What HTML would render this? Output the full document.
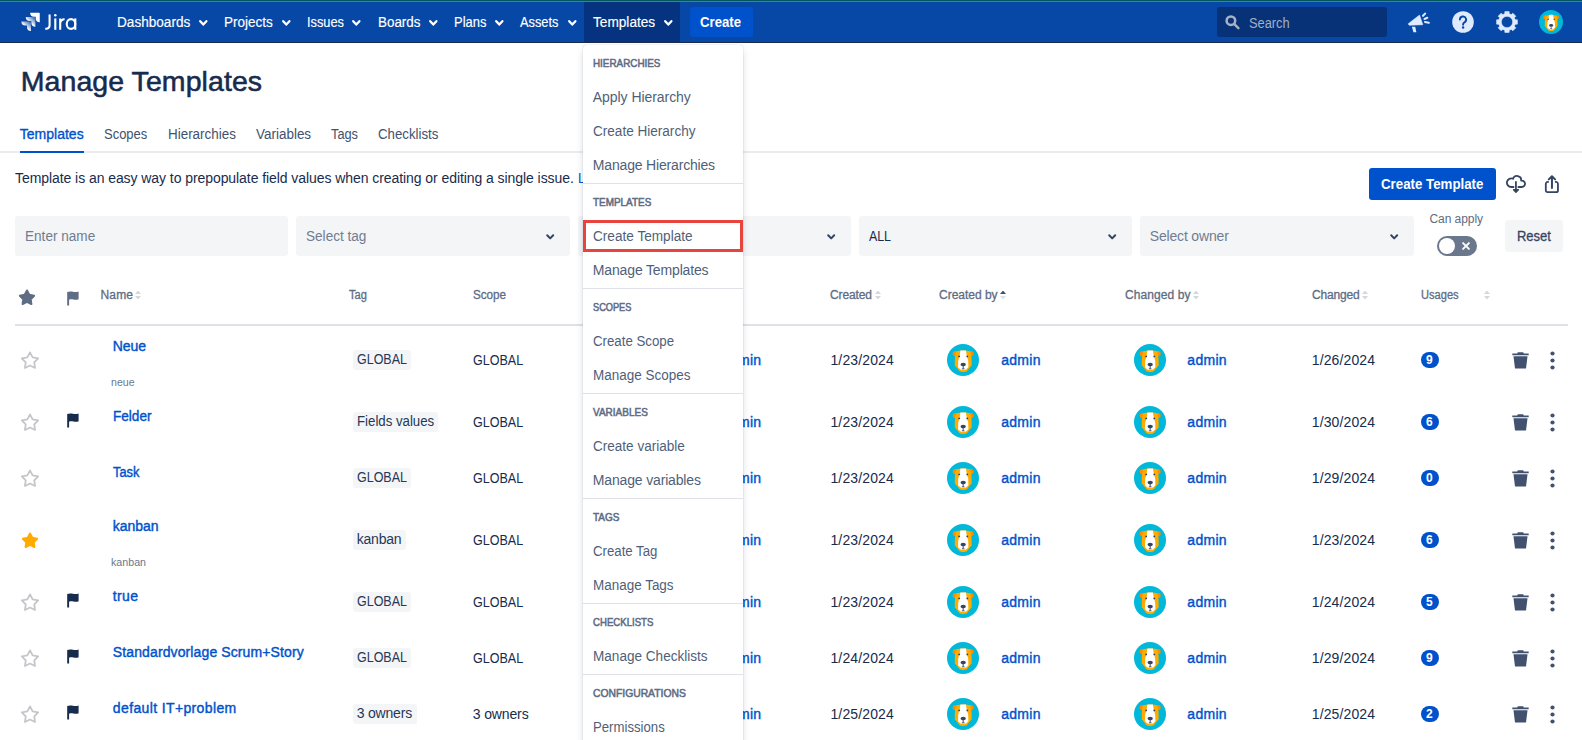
<!DOCTYPE html>
<html lang="en"><head><meta charset="utf-8"><title>Manage Templates - Jira</title>
<style>
*{box-sizing:border-box;margin:0;padding:0}
html,body{width:1582px;height:740px;overflow:hidden;background:#fff}
body{font-family:"Liberation Sans",sans-serif;font-size:14px;color:#172B4D;position:relative}
.t{position:absolute;white-space:nowrap;display:block;transform-origin:0 50%}
.a{position:absolute;display:block}
svg{position:absolute;display:block;overflow:visible}
.fld{position:absolute;top:216px;height:40px;background:#F4F5F7;border-radius:3px}
.loz{position:absolute;height:20px;background:#F4F5F7;border-radius:3px}
.badge{position:absolute;width:18px;height:16px;border-radius:8px;background:#0052CC}
.div{position:absolute;left:583px;width:160px;height:1px;background:#DFE1E6}
</style></head>
<body>
<div class="a" style="left:0;top:0;width:1582px;height:1px;background:#00585C"></div><div class="a" style="left:0;top:1px;width:1582px;height:1px;background:#3D8587"></div>
<header class="a" style="left:0;top:2px;width:1582px;height:41px;background:#0747A6;border-bottom:1px solid #1B2B4B"></header>
<div class="a" style="left:584px;top:2px;width:96px;height:40px;background:#05337F"></div>
<svg style="left:19.6px;top:12.4px" width="20" height="20" viewBox="0 0 32 32">
<defs>
<linearGradient id="jg1" x1="0.95" y1="0.05" x2="0.45" y2="0.6"><stop offset="0.1" stop-color="#fff" stop-opacity="0.25"/><stop offset="1" stop-color="#fff"/></linearGradient>
</defs>
<path fill="#fff" d="M30.4 1H16.2a6.4 6.4 0 0 0 6.4 6.4h2.6v2.5a6.4 6.4 0 0 0 6.4 6.4V2.2A1.2 1.2 0 0 0 30.4 1z"/>
<path fill="url(#jg1)" d="M23.4 8.1H9.2a6.4 6.4 0 0 0 6.4 6.4h2.6V17a6.4 6.4 0 0 0 6.4 6.4V9.3a1.2 1.2 0 0 0-1.2-1.2z"/>
<path fill="url(#jg1)" d="M16.4 15.2H2.2a6.4 6.4 0 0 0 6.4 6.4h2.6v2.5a6.4 6.4 0 0 0 6.4 6.4V16.4a1.2 1.2 0 0 0-1.2-1.2z"/>
</svg>
<svg style="left:44px;top:13px" width="34" height="19" viewBox="0 0 34 19" fill="none" stroke="#fff" stroke-width="2.1">
<path d="M5.6 1.5V12.6a3.2 3.2 0 0 1-3.2 3.2H1.2"/>
<path d="M11.3 5.4V16.8"/>
<path d="M16.2 5.4V16.8M16.2 10.6a4.2 4.2 0 0 1 4.4-4.3"/>
<ellipse cx="27" cy="11" rx="4.25" ry="4.9"/>
<path d="M31.3 5.4V16.8"/>
<circle cx="11.3" cy="2.3" r="1.3" fill="#fff" stroke="none"/>
</svg>
<span class="t" style="left:116.64px;top:12.15px;font-size:14px;line-height:20px;color:#fff;transform:scaleX(0.9709);-webkit-text-stroke:0.15px #fff;">Dashboards</span>
<svg style="left:199.0px;top:19.6px" width="8.6" height="5.6" viewBox="0 0 8.6 5.6" fill="none" stroke="#fff" stroke-width="2.3" stroke-linecap="round" stroke-linejoin="round"><path d="M1.2 1.2L4.30 4.60L7.40 1.2"/></svg>
<span class="t" style="left:224.14px;top:12.15px;font-size:14px;line-height:20px;color:#fff;transform:scaleX(0.9629);-webkit-text-stroke:0.15px #fff;">Projects</span>
<svg style="left:281.9px;top:19.6px" width="8.6" height="5.6" viewBox="0 0 8.6 5.6" fill="none" stroke="#fff" stroke-width="2.3" stroke-linecap="round" stroke-linejoin="round"><path d="M1.2 1.2L4.30 4.60L7.40 1.2"/></svg>
<span class="t" style="left:306.74px;top:12.15px;font-size:14px;line-height:20px;color:#fff;transform:scaleX(0.9118);-webkit-text-stroke:0.15px #fff;">Issues</span>
<svg style="left:351.9px;top:19.6px" width="8.6" height="5.6" viewBox="0 0 8.6 5.6" fill="none" stroke="#fff" stroke-width="2.3" stroke-linecap="round" stroke-linejoin="round"><path d="M1.2 1.2L4.30 4.60L7.40 1.2"/></svg>
<span class="t" style="left:377.54px;top:12.15px;font-size:14px;line-height:20px;color:#fff;transform:scaleX(0.9581);-webkit-text-stroke:0.15px #fff;">Boards</span>
<svg style="left:428.8px;top:19.6px" width="8.6" height="5.6" viewBox="0 0 8.6 5.6" fill="none" stroke="#fff" stroke-width="2.3" stroke-linecap="round" stroke-linejoin="round"><path d="M1.2 1.2L4.30 4.60L7.40 1.2"/></svg>
<span class="t" style="left:454.14px;top:12.15px;font-size:14px;line-height:20px;color:#fff;transform:scaleX(0.9249);-webkit-text-stroke:0.15px #fff;">Plans</span>
<svg style="left:495.1px;top:19.6px" width="8.6" height="5.6" viewBox="0 0 8.6 5.6" fill="none" stroke="#fff" stroke-width="2.3" stroke-linecap="round" stroke-linejoin="round"><path d="M1.2 1.2L4.30 4.60L7.40 1.2"/></svg>
<span class="t" style="left:520.34px;top:12.15px;font-size:14px;line-height:20px;color:#fff;transform:scaleX(0.9139);-webkit-text-stroke:0.15px #fff;">Assets</span>
<svg style="left:567.8px;top:19.6px" width="8.6" height="5.6" viewBox="0 0 8.6 5.6" fill="none" stroke="#fff" stroke-width="2.3" stroke-linecap="round" stroke-linejoin="round"><path d="M1.2 1.2L4.30 4.60L7.40 1.2"/></svg>
<span class="t" style="left:593.14px;top:12.15px;font-size:14px;line-height:20px;color:#fff;transform:scaleX(0.9747);-webkit-text-stroke:0.15px #fff;">Templates</span>
<svg style="left:663.9px;top:19.6px" width="8.6" height="5.6" viewBox="0 0 8.6 5.6" fill="none" stroke="#fff" stroke-width="2.3" stroke-linecap="round" stroke-linejoin="round"><path d="M1.2 1.2L4.30 4.60L7.40 1.2"/></svg>
<div class="a" style="left:690px;top:7px;width:63px;height:30px;background:#0052CC;border-radius:3px"></div>
<span class="t" style="left:700.34px;top:12.15px;font-size:14px;line-height:20px;color:#fff;font-weight:700;transform:scaleX(0.9405);">Create</span>
<div class="a" style="left:1217px;top:7px;width:170px;height:30px;background:#083277;border-radius:3px"></div>
<svg style="left:1224.5px;top:15px" width="15" height="15" viewBox="0 0 15 15" fill="none" stroke="#A9B2C4" stroke-width="2.5" stroke-linecap="round"><circle cx="5.9" cy="5.7" r="4.3"/><path d="M9.3 9.2L13.4 13.2"/></svg>
<span class="t" style="left:1249.04px;top:12.75px;font-size:14px;line-height:20px;color:#A3AFC6;transform:scaleX(0.9153);">Search</span>
<svg style="left:1408px;top:11.5px" width="23" height="21" viewBox="0 0 23 21" fill="#DEEBFF">
<path d="M0.3 11.7L11.5 3.1L14.8 12.7L1.1 13.2Z" stroke="#DEEBFF" stroke-width="0.6" stroke-linejoin="round"/>
<path d="M3.9 14.7H7.2L8.4 20.3H5.4Z"/>
<g stroke="#DEEBFF" stroke-width="2.1" stroke-linecap="round" fill="none"><path d="M15 3.8L17.1 1.6"/><path d="M16.5 6.9L19.3 5.8"/><path d="M17 10L20.8 10.7"/></g>
</svg>
<svg style="left:1452px;top:11px" width="22" height="22" viewBox="0 0 22 22"><circle cx="11" cy="11" r="10.8" fill="#DEEBFF"/>
<path d="M7.9 8.6a3.1 3.1 0 1 1 4.6 2.7c-.9.6-1.4 1-1.4 2.1v.4" fill="none" stroke="#0747A6" stroke-width="1.9" stroke-linecap="round"/><circle cx="11.1" cy="16.5" r="1.2" fill="#0747A6"/></svg>
<svg style="left:1496px;top:11px" width="22" height="22" viewBox="0 0 22 22"><path fill="#DEEBFF" fill-rule="evenodd" stroke="#DEEBFF" stroke-width="0.6" stroke-linejoin="round" d="M8.85 0.62L13.15 0.62L13.24 2.80L15.22 3.62L16.82 2.14L19.86 5.18L18.38 6.78L19.20 8.76L21.38 8.85L21.38 13.15L19.20 13.24L18.38 15.22L19.86 16.82L16.82 19.86L15.22 18.38L13.24 19.20L13.15 21.38L8.85 21.38L8.76 19.20L6.78 18.38L5.18 19.86L2.14 16.82L3.62 15.22L2.80 13.24L0.62 13.15L0.62 8.85L2.80 8.76L3.62 6.78L2.14 5.18L5.18 2.14L6.78 3.62L8.76 2.80Z M11 5.3a5.7 5.7 0 1 0 0 11.4a5.7 5.7 0 1 0 0-11.4Z"/></svg>
<svg style="left:1539.0px;top:10.0px" width="24" height="24" viewBox="0 0 32 32"><circle cx="16" cy="16" r="16" fill="#00B8D9"/>
<circle cx="8.4" cy="9.6" r="2.7" fill="#FF8B00"/><circle cx="24" cy="9.6" r="2.7" fill="#FF8B00"/>
<path fill="#FFAB00" d="M9.2 7.4C11.5 6.2 20.9 6.2 23.2 7.4C24.6 10.5 24.8 17.5 24.6 21.2L19.8 27.2C18.3 28.1 14.1 28.1 12.6 27.2L7.8 21.2C7.6 17.5 7.8 10.5 9.2 7.4Z"/>
<path fill="#fff" d="M13.4 6.6C15 6.3 17.4 6.3 19 6.6C19.2 10 20.2 13.5 21.2 16.5L21.4 23.2L19 25.6C17.5 26.2 14.9 26.2 13.4 25.6L11 23.2L11.2 16.5C12.2 13.5 13.2 10 13.4 6.6Z"/>
<ellipse cx="16.2" cy="20.6" rx="2.7" ry="1.8" fill="#344563"/>
<path d="M16.2 22.2V24.6M14.9 24.8H17.5" stroke="#344563" stroke-width="0.9" fill="none"/>
<circle cx="12.2" cy="12.4" r="0.95" fill="#344563"/><circle cx="20.3" cy="12.4" r="0.95" fill="#344563"/></svg>
<span class="t" style="left:20.76px;top:63.52px;font-size:28.5px;line-height:34px;color:#172B4D;letter-spacing:0.067px;-webkit-text-stroke:0.55px #172B4D;">Manage Templates</span>
<div class="a" style="left:0;top:151px;width:1582px;height:2px;background:#EBECF0"></div>
<div class="a" style="left:20px;top:151px;width:64px;height:2px;background:#0052CC"></div>
<span class="t" style="left:19.74px;top:123.85px;font-size:14px;line-height:20px;color:#0052CC;letter-spacing:0.011px;-webkit-text-stroke:0.35px #0052CC;">Templates</span>
<span class="t" style="left:103.74px;top:123.85px;font-size:14px;line-height:20px;color:#42526E;transform:scaleX(0.9271);">Scopes</span>
<span class="t" style="left:167.84px;top:123.85px;font-size:14px;line-height:20px;color:#42526E;transform:scaleX(0.9589);">Hierarchies</span>
<span class="t" style="left:255.84px;top:123.85px;font-size:14px;line-height:20px;color:#42526E;transform:scaleX(0.9611);">Variables</span>
<span class="t" style="left:330.94px;top:123.85px;font-size:14px;line-height:20px;color:#42526E;transform:scaleX(0.9128);">Tags</span>
<span class="t" style="left:378.24px;top:123.85px;font-size:14px;line-height:20px;color:#42526E;transform:scaleX(0.9452);">Checklists</span>
<span class="t" style="left:15.04px;top:167.95px;font-size:14px;line-height:20px;color:#172B4D;letter-spacing:-0.068px;">Template is an easy way to prepopulate field values when creating or editing a single issue.</span>
<span class="t" style="left:578.04px;top:167.95px;font-size:14px;line-height:20px;color:#0052CC;transform:scaleX(0.9442);">Learn more</span>
<div class="a" style="left:1369px;top:168px;width:127px;height:32px;background:#0052CC;border-radius:3px"></div>
<span class="t" style="left:1381.04px;top:174.05px;font-size:14px;line-height:20px;color:#fff;font-weight:700;transform:scaleX(0.9490);">Create Template</span>
<svg style="left:1506px;top:174px" width="21" height="20" viewBox="0 0 21 20" fill="none" stroke="#344563" stroke-width="1.8" stroke-linecap="round" stroke-linejoin="round">
<path d="M7.5 13H5.2A4.3 4.3 0 1 1 7.03 4.81A4.2 4.2 0 0 1 15.18 6.67A3.2 3.2 0 1 1 15.8 13H12.4"/>
<path d="M9.93 7.9V15.5"/><path d="M7.5 15.7H12.4L9.93 18.4Z" fill="#344563" stroke-width="1.3"/></svg>
<svg style="left:1544px;top:174px" width="16" height="20" viewBox="0 0 16 20" fill="none" stroke="#344563" stroke-width="1.8" stroke-linecap="round" stroke-linejoin="round">
<path d="M4.1 7.95H3.8a2 2 0 0 0-2 2V16.4a1.7 1.7 0 0 0 1.7 1.7H12.25a1.7 1.7 0 0 0 1.7-1.7V9.95a2 2 0 0 0-2-2H11.7"/><path d="M7.95 14V2.6M4.8 5.4L7.95 2.2L11.1 5.4" stroke-width="2"/></svg>
<div class="fld" style="left:15px;width:273px"></div>
<div class="fld" style="left:296px;width:274px"></div>
<div class="fld" style="left:578px;width:273px"></div>
<div class="fld" style="left:859px;width:273px"></div>
<div class="fld" style="left:1140px;width:274px"></div>
<span class="t" style="left:24.74px;top:226.15px;font-size:14px;line-height:20px;color:#707C91;transform:scaleX(0.9699);">Enter name</span>
<span class="t" style="left:305.84px;top:226.15px;font-size:14px;line-height:20px;color:#707C91;transform:scaleX(0.9700);">Select tag</span>
<span class="t" style="left:868.64px;top:226.15px;font-size:14px;line-height:20px;color:#172B4D;transform:scaleX(0.8828);">ALL</span>
<span class="t" style="left:1149.74px;top:226.15px;font-size:14px;line-height:20px;color:#707C91;letter-spacing:-0.167px;">Select owner</span>
<svg style="left:545.9px;top:234.1px" width="8.4" height="5.4" viewBox="0 0 8.4 5.4" fill="none" stroke="#344563" stroke-width="2" stroke-linecap="round" stroke-linejoin="round"><path d="M1.2 1.2L4.20 4.40L7.20 1.2"/></svg>
<svg style="left:826.8px;top:234.1px" width="8.4" height="5.4" viewBox="0 0 8.4 5.4" fill="none" stroke="#344563" stroke-width="2" stroke-linecap="round" stroke-linejoin="round"><path d="M1.2 1.2L4.20 4.40L7.20 1.2"/></svg>
<svg style="left:1107.6px;top:234.1px" width="8.4" height="5.4" viewBox="0 0 8.4 5.4" fill="none" stroke="#344563" stroke-width="2" stroke-linecap="round" stroke-linejoin="round"><path d="M1.2 1.2L4.20 4.40L7.20 1.2"/></svg>
<svg style="left:1389.8px;top:234.1px" width="8.4" height="5.4" viewBox="0 0 8.4 5.4" fill="none" stroke="#344563" stroke-width="2" stroke-linecap="round" stroke-linejoin="round"><path d="M1.2 1.2L4.20 4.40L7.20 1.2"/></svg>
<span class="t" style="left:1429.52px;top:211.04px;font-size:12px;line-height:16px;color:#5E6C84;letter-spacing:-0.068px;">Can apply</span>
<div class="a" style="left:1437px;top:236px;width:40px;height:20px;border-radius:10px;background:#6B778C"></div>
<div class="a" style="left:1439px;top:238px;width:16px;height:16px;border-radius:8px;background:#fff"></div>
<svg style="left:1462px;top:242px" width="8" height="8" viewBox="0 0 8 8" stroke="#fff" stroke-width="1.9" stroke-linecap="round" fill="none"><path d="M1.1 1.1L6.9 6.9"/><path d="M6.9 1.1L1.1 6.9"/></svg>
<div class="a" style="left:1505px;top:220px;width:58px;height:32px;background:#F4F5F7;border-radius:3px"></div>
<span class="t" style="left:1516.84px;top:225.75px;font-size:14px;line-height:20px;color:#344563;transform:scaleX(0.9268);-webkit-text-stroke:0.3px #344563;">Reset</span>
<svg style="left:15.2px;top:285.9px" width="24" height="24" viewBox="0 0 24 24"><path d="M12.00 4.50L14.29 8.84L19.13 9.68L15.71 13.21L16.41 18.07L12.00 15.90L7.59 18.07L8.29 13.21L4.87 9.68L9.71 8.84Z" fill="#5E6C84" stroke="#5E6C84" stroke-width="2" stroke-linejoin="round"/></svg>
<svg style="left:67.3px;top:290.6px" width="13" height="15" viewBox="0 0 13 15"><path fill="#5E6C84" d="M0.2 1.1C2 0.1 4 0.3 6 0.8S10 1.2 11.6 0.5V8.3C10 9 8 8.9 6.5 8.5S3.5 8 2.1 8.7V14.6H0.2Z"/></svg>
<span class="t" style="left:100.62px;top:287.24px;font-size:12px;line-height:16px;color:#5E6C84;letter-spacing:0.095px;-webkit-text-stroke:0.3px #5E6C84;">Name</span>
<svg style="left:135.0px;top:291.0px" width="6" height="8" viewBox="0 0 6 8"><path fill="#D3D7DE" d="M0 3L2.5 0H3.5L6 3Z"/><path fill="#D3D7DE" d="M0 5L2.5 8H3.5L6 5Z"/></svg>
<span class="t" style="left:348.92px;top:287.24px;font-size:12px;line-height:16px;color:#5E6C84;transform:scaleX(0.9246);-webkit-text-stroke:0.3px #5E6C84;">Tag</span>
<span class="t" style="left:472.82px;top:287.24px;font-size:12px;line-height:16px;color:#5E6C84;transform:scaleX(0.9726);-webkit-text-stroke:0.3px #5E6C84;">Scope</span>
<span class="t" style="left:830.02px;top:287.24px;font-size:12px;line-height:16px;color:#5E6C84;letter-spacing:-0.134px;-webkit-text-stroke:0.3px #5E6C84;">Created</span>
<svg style="left:875.2px;top:291.0px" width="6" height="8" viewBox="0 0 6 8"><path fill="#D3D7DE" d="M0 3L2.5 0H3.5L6 3Z"/><path fill="#D3D7DE" d="M0 5L2.5 8H3.5L6 5Z"/></svg>
<span class="t" style="left:939.02px;top:287.24px;font-size:12px;line-height:16px;color:#5E6C84;letter-spacing:-0.011px;-webkit-text-stroke:0.3px #5E6C84;">Created by</span>
<svg style="left:1000.0px;top:291.0px" width="6" height="8" viewBox="0 0 6 8"><path fill="#42526E" d="M0 3L2.5 0H3.5L6 3Z"/><path fill="#DFE1E6" d="M0 5L2.5 8H3.5L6 5Z"/></svg>
<span class="t" style="left:1125.12px;top:287.24px;font-size:12px;line-height:16px;color:#5E6C84;letter-spacing:0.076px;-webkit-text-stroke:0.3px #5E6C84;">Changed by</span>
<svg style="left:1193.0px;top:291.0px" width="6" height="8" viewBox="0 0 6 8"><path fill="#D3D7DE" d="M0 3L2.5 0H3.5L6 3Z"/><path fill="#D3D7DE" d="M0 5L2.5 8H3.5L6 5Z"/></svg>
<span class="t" style="left:1311.92px;top:287.24px;font-size:12px;line-height:16px;color:#5E6C84;letter-spacing:-0.170px;-webkit-text-stroke:0.3px #5E6C84;">Changed</span>
<svg style="left:1362.0px;top:291.0px" width="6" height="8" viewBox="0 0 6 8"><path fill="#D3D7DE" d="M0 3L2.5 0H3.5L6 3Z"/><path fill="#D3D7DE" d="M0 5L2.5 8H3.5L6 5Z"/></svg>
<span class="t" style="left:1421.02px;top:287.24px;font-size:12px;line-height:16px;color:#5E6C84;transform:scaleX(0.9241);-webkit-text-stroke:0.3px #5E6C84;">Usages</span>
<svg style="left:1484.0px;top:291.0px" width="6" height="8" viewBox="0 0 6 8"><path fill="#D3D7DE" d="M0 3L2.5 0H3.5L6 3Z"/><path fill="#D3D7DE" d="M0 5L2.5 8H3.5L6 5Z"/></svg>
<div class="a" style="left:15px;top:324px;width:1553px;height:2px;background:#DFE1E6"></div>
<svg style="left:18.0px;top:349.4px" width="24" height="24" viewBox="0 0 24 24"><path d="M12.00 3.40L14.63 8.38L20.18 9.34L16.25 13.38L17.05 18.96L12.00 16.47L6.95 18.96L7.75 13.38L3.82 9.34L9.37 8.38Z" fill="none" stroke="#C4C6CA" stroke-width="1.8" stroke-linejoin="round"/></svg>
<span class="t" style="left:112.84px;top:336.25px;font-size:14px;line-height:20px;color:#0052CC;letter-spacing:-0.090px;-webkit-text-stroke:0.4px #0052CC;">Neue</span>
<span class="t" style="left:110.76px;top:375.49px;font-size:11px;line-height:14px;color:#6B778C;transform:scaleX(0.9639);">neue</span>
<div class="loz" style="left:352.7px;top:350.0px;width:58.2px"></div>
<span class="t" style="left:356.64px;top:349.45px;font-size:14px;line-height:20px;color:#253858;transform:scaleX(0.8906);">GLOBAL</span>
<span class="t" style="left:472.74px;top:350.45px;font-size:14px;line-height:20px;color:#172B4D;transform:scaleX(0.8959);">GLOBAL</span>
<svg style="left:667.0px;top:344.0px" width="32" height="32" viewBox="0 0 32 32"><circle cx="16" cy="16" r="16" fill="#00B8D9"/>
<circle cx="8.4" cy="9.6" r="2.7" fill="#FF8B00"/><circle cx="24" cy="9.6" r="2.7" fill="#FF8B00"/>
<path fill="#FFAB00" d="M9.2 7.4C11.5 6.2 20.9 6.2 23.2 7.4C24.6 10.5 24.8 17.5 24.6 21.2L19.8 27.2C18.3 28.1 14.1 28.1 12.6 27.2L7.8 21.2C7.6 17.5 7.8 10.5 9.2 7.4Z"/>
<path fill="#fff" d="M13.4 6.6C15 6.3 17.4 6.3 19 6.6C19.2 10 20.2 13.5 21.2 16.5L21.4 23.2L19 25.6C17.5 26.2 14.9 26.2 13.4 25.6L11 23.2L11.2 16.5C12.2 13.5 13.2 10 13.4 6.6Z"/>
<ellipse cx="16.2" cy="20.6" rx="2.7" ry="1.8" fill="#344563"/>
<path d="M16.2 22.2V24.6M14.9 24.8H17.5" stroke="#344563" stroke-width="0.9" fill="none"/>
<circle cx="12.2" cy="12.4" r="0.95" fill="#344563"/><circle cx="20.3" cy="12.4" r="0.95" fill="#344563"/></svg>
<span class="t" style="left:721.74px;top:350.45px;font-size:14px;line-height:20px;color:#0052CC;letter-spacing:0.315px;-webkit-text-stroke:0.4px #0052CC;">admin</span>
<span class="t" style="left:830.44px;top:350.45px;font-size:14px;line-height:20px;color:#172B4D;letter-spacing:0.138px;">1/23/2024</span>
<svg style="left:947.0px;top:344.0px" width="32" height="32" viewBox="0 0 32 32"><circle cx="16" cy="16" r="16" fill="#00B8D9"/>
<circle cx="8.4" cy="9.6" r="2.7" fill="#FF8B00"/><circle cx="24" cy="9.6" r="2.7" fill="#FF8B00"/>
<path fill="#FFAB00" d="M9.2 7.4C11.5 6.2 20.9 6.2 23.2 7.4C24.6 10.5 24.8 17.5 24.6 21.2L19.8 27.2C18.3 28.1 14.1 28.1 12.6 27.2L7.8 21.2C7.6 17.5 7.8 10.5 9.2 7.4Z"/>
<path fill="#fff" d="M13.4 6.6C15 6.3 17.4 6.3 19 6.6C19.2 10 20.2 13.5 21.2 16.5L21.4 23.2L19 25.6C17.5 26.2 14.9 26.2 13.4 25.6L11 23.2L11.2 16.5C12.2 13.5 13.2 10 13.4 6.6Z"/>
<ellipse cx="16.2" cy="20.6" rx="2.7" ry="1.8" fill="#344563"/>
<path d="M16.2 22.2V24.6M14.9 24.8H17.5" stroke="#344563" stroke-width="0.9" fill="none"/>
<circle cx="12.2" cy="12.4" r="0.95" fill="#344563"/><circle cx="20.3" cy="12.4" r="0.95" fill="#344563"/></svg>
<span class="t" style="left:1001.14px;top:350.45px;font-size:14px;line-height:20px;color:#0052CC;letter-spacing:0.315px;-webkit-text-stroke:0.4px #0052CC;">admin</span>
<svg style="left:1134.0px;top:344.0px" width="32" height="32" viewBox="0 0 32 32"><circle cx="16" cy="16" r="16" fill="#00B8D9"/>
<circle cx="8.4" cy="9.6" r="2.7" fill="#FF8B00"/><circle cx="24" cy="9.6" r="2.7" fill="#FF8B00"/>
<path fill="#FFAB00" d="M9.2 7.4C11.5 6.2 20.9 6.2 23.2 7.4C24.6 10.5 24.8 17.5 24.6 21.2L19.8 27.2C18.3 28.1 14.1 28.1 12.6 27.2L7.8 21.2C7.6 17.5 7.8 10.5 9.2 7.4Z"/>
<path fill="#fff" d="M13.4 6.6C15 6.3 17.4 6.3 19 6.6C19.2 10 20.2 13.5 21.2 16.5L21.4 23.2L19 25.6C17.5 26.2 14.9 26.2 13.4 25.6L11 23.2L11.2 16.5C12.2 13.5 13.2 10 13.4 6.6Z"/>
<ellipse cx="16.2" cy="20.6" rx="2.7" ry="1.8" fill="#344563"/>
<path d="M16.2 22.2V24.6M14.9 24.8H17.5" stroke="#344563" stroke-width="0.9" fill="none"/>
<circle cx="12.2" cy="12.4" r="0.95" fill="#344563"/><circle cx="20.3" cy="12.4" r="0.95" fill="#344563"/></svg>
<span class="t" style="left:1187.34px;top:350.45px;font-size:14px;line-height:20px;color:#0052CC;letter-spacing:0.290px;-webkit-text-stroke:0.4px #0052CC;">admin</span>
<span class="t" style="left:1311.74px;top:350.45px;font-size:14px;line-height:20px;color:#172B4D;letter-spacing:0.125px;">1/26/2024</span>
<div class="badge" style="left:1420.8px;top:352.0px"></div>
<span class="t" style="left:1425.92px;top:352.04px;font-size:12px;line-height:16px;color:#fff;font-weight:700;letter-spacing:0.312px;">9</span>
<svg style="left:1511.5px;top:351.7px" width="17" height="17" viewBox="0 0 17 17" fill="#42526E"><path d="M0.3 1.5H5.3C5.3 0.6 5.8 0.3 6.5 0.3H10.5C11.2 0.3 11.7 0.6 11.7 1.5H16.7V3.3H0.3Z"/><path d="M1.5 4.2H15.5L14 16.6H3Z"/></svg>
<svg style="left:1549.5px;top:350.7px" width="5" height="19" viewBox="0 0 5 19" fill="#42526E"><circle cx="2.5" cy="2.5" r="2.1"/><circle cx="2.5" cy="9.5" r="2.1"/><circle cx="2.5" cy="16.5" r="2.1"/></svg>
<svg style="left:18.0px;top:411.4px" width="24" height="24" viewBox="0 0 24 24"><path d="M12.00 3.40L14.63 8.38L20.18 9.34L16.25 13.38L17.05 18.96L12.00 16.47L6.95 18.96L7.75 13.38L3.82 9.34L9.37 8.38Z" fill="none" stroke="#C4C6CA" stroke-width="1.8" stroke-linejoin="round"/></svg>
<svg style="left:67.3px;top:412.7px" width="13" height="15" viewBox="0 0 13 15"><path fill="#172B4D" d="M0.2 1.1C2 0.1 4 0.3 6 0.8S10 1.2 11.6 0.5V8.3C10 9 8 8.9 6.5 8.5S3.5 8 2.1 8.7V14.6H0.2Z"/></svg>
<span class="t" style="left:112.84px;top:405.95px;font-size:14px;line-height:20px;color:#0052CC;transform:scaleX(0.9701);-webkit-text-stroke:0.4px #0052CC;">Felder</span>
<div class="loz" style="left:352.7px;top:412.0px;width:85.5px"></div>
<span class="t" style="left:356.64px;top:411.45px;font-size:14px;line-height:20px;color:#253858;transform:scaleX(0.9449);">Fields values</span>
<span class="t" style="left:472.74px;top:412.45px;font-size:14px;line-height:20px;color:#172B4D;transform:scaleX(0.8959);">GLOBAL</span>
<svg style="left:667.0px;top:406.0px" width="32" height="32" viewBox="0 0 32 32"><circle cx="16" cy="16" r="16" fill="#00B8D9"/>
<circle cx="8.4" cy="9.6" r="2.7" fill="#FF8B00"/><circle cx="24" cy="9.6" r="2.7" fill="#FF8B00"/>
<path fill="#FFAB00" d="M9.2 7.4C11.5 6.2 20.9 6.2 23.2 7.4C24.6 10.5 24.8 17.5 24.6 21.2L19.8 27.2C18.3 28.1 14.1 28.1 12.6 27.2L7.8 21.2C7.6 17.5 7.8 10.5 9.2 7.4Z"/>
<path fill="#fff" d="M13.4 6.6C15 6.3 17.4 6.3 19 6.6C19.2 10 20.2 13.5 21.2 16.5L21.4 23.2L19 25.6C17.5 26.2 14.9 26.2 13.4 25.6L11 23.2L11.2 16.5C12.2 13.5 13.2 10 13.4 6.6Z"/>
<ellipse cx="16.2" cy="20.6" rx="2.7" ry="1.8" fill="#344563"/>
<path d="M16.2 22.2V24.6M14.9 24.8H17.5" stroke="#344563" stroke-width="0.9" fill="none"/>
<circle cx="12.2" cy="12.4" r="0.95" fill="#344563"/><circle cx="20.3" cy="12.4" r="0.95" fill="#344563"/></svg>
<span class="t" style="left:721.74px;top:412.45px;font-size:14px;line-height:20px;color:#0052CC;letter-spacing:0.315px;-webkit-text-stroke:0.4px #0052CC;">admin</span>
<span class="t" style="left:830.44px;top:412.45px;font-size:14px;line-height:20px;color:#172B4D;letter-spacing:0.138px;">1/23/2024</span>
<svg style="left:947.0px;top:406.0px" width="32" height="32" viewBox="0 0 32 32"><circle cx="16" cy="16" r="16" fill="#00B8D9"/>
<circle cx="8.4" cy="9.6" r="2.7" fill="#FF8B00"/><circle cx="24" cy="9.6" r="2.7" fill="#FF8B00"/>
<path fill="#FFAB00" d="M9.2 7.4C11.5 6.2 20.9 6.2 23.2 7.4C24.6 10.5 24.8 17.5 24.6 21.2L19.8 27.2C18.3 28.1 14.1 28.1 12.6 27.2L7.8 21.2C7.6 17.5 7.8 10.5 9.2 7.4Z"/>
<path fill="#fff" d="M13.4 6.6C15 6.3 17.4 6.3 19 6.6C19.2 10 20.2 13.5 21.2 16.5L21.4 23.2L19 25.6C17.5 26.2 14.9 26.2 13.4 25.6L11 23.2L11.2 16.5C12.2 13.5 13.2 10 13.4 6.6Z"/>
<ellipse cx="16.2" cy="20.6" rx="2.7" ry="1.8" fill="#344563"/>
<path d="M16.2 22.2V24.6M14.9 24.8H17.5" stroke="#344563" stroke-width="0.9" fill="none"/>
<circle cx="12.2" cy="12.4" r="0.95" fill="#344563"/><circle cx="20.3" cy="12.4" r="0.95" fill="#344563"/></svg>
<span class="t" style="left:1001.14px;top:412.45px;font-size:14px;line-height:20px;color:#0052CC;letter-spacing:0.315px;-webkit-text-stroke:0.4px #0052CC;">admin</span>
<svg style="left:1134.0px;top:406.0px" width="32" height="32" viewBox="0 0 32 32"><circle cx="16" cy="16" r="16" fill="#00B8D9"/>
<circle cx="8.4" cy="9.6" r="2.7" fill="#FF8B00"/><circle cx="24" cy="9.6" r="2.7" fill="#FF8B00"/>
<path fill="#FFAB00" d="M9.2 7.4C11.5 6.2 20.9 6.2 23.2 7.4C24.6 10.5 24.8 17.5 24.6 21.2L19.8 27.2C18.3 28.1 14.1 28.1 12.6 27.2L7.8 21.2C7.6 17.5 7.8 10.5 9.2 7.4Z"/>
<path fill="#fff" d="M13.4 6.6C15 6.3 17.4 6.3 19 6.6C19.2 10 20.2 13.5 21.2 16.5L21.4 23.2L19 25.6C17.5 26.2 14.9 26.2 13.4 25.6L11 23.2L11.2 16.5C12.2 13.5 13.2 10 13.4 6.6Z"/>
<ellipse cx="16.2" cy="20.6" rx="2.7" ry="1.8" fill="#344563"/>
<path d="M16.2 22.2V24.6M14.9 24.8H17.5" stroke="#344563" stroke-width="0.9" fill="none"/>
<circle cx="12.2" cy="12.4" r="0.95" fill="#344563"/><circle cx="20.3" cy="12.4" r="0.95" fill="#344563"/></svg>
<span class="t" style="left:1187.34px;top:412.45px;font-size:14px;line-height:20px;color:#0052CC;letter-spacing:0.290px;-webkit-text-stroke:0.4px #0052CC;">admin</span>
<span class="t" style="left:1311.74px;top:412.45px;font-size:14px;line-height:20px;color:#172B4D;letter-spacing:0.125px;">1/30/2024</span>
<div class="badge" style="left:1420.8px;top:414.0px"></div>
<span class="t" style="left:1425.92px;top:414.04px;font-size:12px;line-height:16px;color:#fff;font-weight:700;letter-spacing:0.312px;">6</span>
<svg style="left:1511.5px;top:413.7px" width="17" height="17" viewBox="0 0 17 17" fill="#42526E"><path d="M0.3 1.5H5.3C5.3 0.6 5.8 0.3 6.5 0.3H10.5C11.2 0.3 11.7 0.6 11.7 1.5H16.7V3.3H0.3Z"/><path d="M1.5 4.2H15.5L14 16.6H3Z"/></svg>
<svg style="left:1549.5px;top:412.7px" width="5" height="19" viewBox="0 0 5 19" fill="#42526E"><circle cx="2.5" cy="2.5" r="2.1"/><circle cx="2.5" cy="9.5" r="2.1"/><circle cx="2.5" cy="16.5" r="2.1"/></svg>
<svg style="left:18.0px;top:467.4px" width="24" height="24" viewBox="0 0 24 24"><path d="M12.00 3.40L14.63 8.38L20.18 9.34L16.25 13.38L17.05 18.96L12.00 16.47L6.95 18.96L7.75 13.38L3.82 9.34L9.37 8.38Z" fill="none" stroke="#C4C6CA" stroke-width="1.8" stroke-linejoin="round"/></svg>
<span class="t" style="left:112.84px;top:461.95px;font-size:14px;line-height:20px;color:#0052CC;transform:scaleX(0.9168);-webkit-text-stroke:0.4px #0052CC;">Task</span>
<div class="loz" style="left:352.7px;top:468.0px;width:58.2px"></div>
<span class="t" style="left:356.64px;top:467.45px;font-size:14px;line-height:20px;color:#253858;transform:scaleX(0.8906);">GLOBAL</span>
<span class="t" style="left:472.74px;top:468.45px;font-size:14px;line-height:20px;color:#172B4D;transform:scaleX(0.8959);">GLOBAL</span>
<svg style="left:667.0px;top:462.0px" width="32" height="32" viewBox="0 0 32 32"><circle cx="16" cy="16" r="16" fill="#00B8D9"/>
<circle cx="8.4" cy="9.6" r="2.7" fill="#FF8B00"/><circle cx="24" cy="9.6" r="2.7" fill="#FF8B00"/>
<path fill="#FFAB00" d="M9.2 7.4C11.5 6.2 20.9 6.2 23.2 7.4C24.6 10.5 24.8 17.5 24.6 21.2L19.8 27.2C18.3 28.1 14.1 28.1 12.6 27.2L7.8 21.2C7.6 17.5 7.8 10.5 9.2 7.4Z"/>
<path fill="#fff" d="M13.4 6.6C15 6.3 17.4 6.3 19 6.6C19.2 10 20.2 13.5 21.2 16.5L21.4 23.2L19 25.6C17.5 26.2 14.9 26.2 13.4 25.6L11 23.2L11.2 16.5C12.2 13.5 13.2 10 13.4 6.6Z"/>
<ellipse cx="16.2" cy="20.6" rx="2.7" ry="1.8" fill="#344563"/>
<path d="M16.2 22.2V24.6M14.9 24.8H17.5" stroke="#344563" stroke-width="0.9" fill="none"/>
<circle cx="12.2" cy="12.4" r="0.95" fill="#344563"/><circle cx="20.3" cy="12.4" r="0.95" fill="#344563"/></svg>
<span class="t" style="left:721.74px;top:468.45px;font-size:14px;line-height:20px;color:#0052CC;letter-spacing:0.315px;-webkit-text-stroke:0.4px #0052CC;">admin</span>
<span class="t" style="left:830.44px;top:468.45px;font-size:14px;line-height:20px;color:#172B4D;letter-spacing:0.138px;">1/23/2024</span>
<svg style="left:947.0px;top:462.0px" width="32" height="32" viewBox="0 0 32 32"><circle cx="16" cy="16" r="16" fill="#00B8D9"/>
<circle cx="8.4" cy="9.6" r="2.7" fill="#FF8B00"/><circle cx="24" cy="9.6" r="2.7" fill="#FF8B00"/>
<path fill="#FFAB00" d="M9.2 7.4C11.5 6.2 20.9 6.2 23.2 7.4C24.6 10.5 24.8 17.5 24.6 21.2L19.8 27.2C18.3 28.1 14.1 28.1 12.6 27.2L7.8 21.2C7.6 17.5 7.8 10.5 9.2 7.4Z"/>
<path fill="#fff" d="M13.4 6.6C15 6.3 17.4 6.3 19 6.6C19.2 10 20.2 13.5 21.2 16.5L21.4 23.2L19 25.6C17.5 26.2 14.9 26.2 13.4 25.6L11 23.2L11.2 16.5C12.2 13.5 13.2 10 13.4 6.6Z"/>
<ellipse cx="16.2" cy="20.6" rx="2.7" ry="1.8" fill="#344563"/>
<path d="M16.2 22.2V24.6M14.9 24.8H17.5" stroke="#344563" stroke-width="0.9" fill="none"/>
<circle cx="12.2" cy="12.4" r="0.95" fill="#344563"/><circle cx="20.3" cy="12.4" r="0.95" fill="#344563"/></svg>
<span class="t" style="left:1001.14px;top:468.45px;font-size:14px;line-height:20px;color:#0052CC;letter-spacing:0.315px;-webkit-text-stroke:0.4px #0052CC;">admin</span>
<svg style="left:1134.0px;top:462.0px" width="32" height="32" viewBox="0 0 32 32"><circle cx="16" cy="16" r="16" fill="#00B8D9"/>
<circle cx="8.4" cy="9.6" r="2.7" fill="#FF8B00"/><circle cx="24" cy="9.6" r="2.7" fill="#FF8B00"/>
<path fill="#FFAB00" d="M9.2 7.4C11.5 6.2 20.9 6.2 23.2 7.4C24.6 10.5 24.8 17.5 24.6 21.2L19.8 27.2C18.3 28.1 14.1 28.1 12.6 27.2L7.8 21.2C7.6 17.5 7.8 10.5 9.2 7.4Z"/>
<path fill="#fff" d="M13.4 6.6C15 6.3 17.4 6.3 19 6.6C19.2 10 20.2 13.5 21.2 16.5L21.4 23.2L19 25.6C17.5 26.2 14.9 26.2 13.4 25.6L11 23.2L11.2 16.5C12.2 13.5 13.2 10 13.4 6.6Z"/>
<ellipse cx="16.2" cy="20.6" rx="2.7" ry="1.8" fill="#344563"/>
<path d="M16.2 22.2V24.6M14.9 24.8H17.5" stroke="#344563" stroke-width="0.9" fill="none"/>
<circle cx="12.2" cy="12.4" r="0.95" fill="#344563"/><circle cx="20.3" cy="12.4" r="0.95" fill="#344563"/></svg>
<span class="t" style="left:1187.34px;top:468.45px;font-size:14px;line-height:20px;color:#0052CC;letter-spacing:0.290px;-webkit-text-stroke:0.4px #0052CC;">admin</span>
<span class="t" style="left:1311.74px;top:468.45px;font-size:14px;line-height:20px;color:#172B4D;letter-spacing:0.125px;">1/29/2024</span>
<div class="badge" style="left:1420.8px;top:470.0px"></div>
<span class="t" style="left:1425.92px;top:470.04px;font-size:12px;line-height:16px;color:#fff;font-weight:700;letter-spacing:0.312px;">0</span>
<svg style="left:1511.5px;top:469.7px" width="17" height="17" viewBox="0 0 17 17" fill="#42526E"><path d="M0.3 1.5H5.3C5.3 0.6 5.8 0.3 6.5 0.3H10.5C11.2 0.3 11.7 0.6 11.7 1.5H16.7V3.3H0.3Z"/><path d="M1.5 4.2H15.5L14 16.6H3Z"/></svg>
<svg style="left:1549.5px;top:468.7px" width="5" height="19" viewBox="0 0 5 19" fill="#42526E"><circle cx="2.5" cy="2.5" r="2.1"/><circle cx="2.5" cy="9.5" r="2.1"/><circle cx="2.5" cy="16.5" r="2.1"/></svg>
<svg style="left:17.8px;top:528.7px" width="24" height="24" viewBox="0 0 24 24"><path d="M12.00 4.50L14.29 8.84L19.13 9.68L15.71 13.21L16.41 18.07L12.00 15.90L7.59 18.07L8.29 13.21L4.87 9.68L9.71 8.84Z" fill="#FFAB00" stroke="#FFAB00" stroke-width="2" stroke-linejoin="round"/></svg>
<span class="t" style="left:112.84px;top:516.25px;font-size:14px;line-height:20px;color:#0052CC;letter-spacing:-0.047px;-webkit-text-stroke:0.4px #0052CC;">kanban</span>
<span class="t" style="left:110.76px;top:555.49px;font-size:11px;line-height:14px;color:#6B778C;transform:scaleX(0.9697);">kanban</span>
<div class="loz" style="left:352.7px;top:530.0px;width:53.3px"></div>
<span class="t" style="left:356.64px;top:529.45px;font-size:14px;line-height:20px;color:#253858;letter-spacing:-0.187px;">kanban</span>
<span class="t" style="left:472.74px;top:530.45px;font-size:14px;line-height:20px;color:#172B4D;transform:scaleX(0.8959);">GLOBAL</span>
<svg style="left:667.0px;top:524.0px" width="32" height="32" viewBox="0 0 32 32"><circle cx="16" cy="16" r="16" fill="#00B8D9"/>
<circle cx="8.4" cy="9.6" r="2.7" fill="#FF8B00"/><circle cx="24" cy="9.6" r="2.7" fill="#FF8B00"/>
<path fill="#FFAB00" d="M9.2 7.4C11.5 6.2 20.9 6.2 23.2 7.4C24.6 10.5 24.8 17.5 24.6 21.2L19.8 27.2C18.3 28.1 14.1 28.1 12.6 27.2L7.8 21.2C7.6 17.5 7.8 10.5 9.2 7.4Z"/>
<path fill="#fff" d="M13.4 6.6C15 6.3 17.4 6.3 19 6.6C19.2 10 20.2 13.5 21.2 16.5L21.4 23.2L19 25.6C17.5 26.2 14.9 26.2 13.4 25.6L11 23.2L11.2 16.5C12.2 13.5 13.2 10 13.4 6.6Z"/>
<ellipse cx="16.2" cy="20.6" rx="2.7" ry="1.8" fill="#344563"/>
<path d="M16.2 22.2V24.6M14.9 24.8H17.5" stroke="#344563" stroke-width="0.9" fill="none"/>
<circle cx="12.2" cy="12.4" r="0.95" fill="#344563"/><circle cx="20.3" cy="12.4" r="0.95" fill="#344563"/></svg>
<span class="t" style="left:721.74px;top:530.45px;font-size:14px;line-height:20px;color:#0052CC;letter-spacing:0.315px;-webkit-text-stroke:0.4px #0052CC;">admin</span>
<span class="t" style="left:830.44px;top:530.45px;font-size:14px;line-height:20px;color:#172B4D;letter-spacing:0.138px;">1/23/2024</span>
<svg style="left:947.0px;top:524.0px" width="32" height="32" viewBox="0 0 32 32"><circle cx="16" cy="16" r="16" fill="#00B8D9"/>
<circle cx="8.4" cy="9.6" r="2.7" fill="#FF8B00"/><circle cx="24" cy="9.6" r="2.7" fill="#FF8B00"/>
<path fill="#FFAB00" d="M9.2 7.4C11.5 6.2 20.9 6.2 23.2 7.4C24.6 10.5 24.8 17.5 24.6 21.2L19.8 27.2C18.3 28.1 14.1 28.1 12.6 27.2L7.8 21.2C7.6 17.5 7.8 10.5 9.2 7.4Z"/>
<path fill="#fff" d="M13.4 6.6C15 6.3 17.4 6.3 19 6.6C19.2 10 20.2 13.5 21.2 16.5L21.4 23.2L19 25.6C17.5 26.2 14.9 26.2 13.4 25.6L11 23.2L11.2 16.5C12.2 13.5 13.2 10 13.4 6.6Z"/>
<ellipse cx="16.2" cy="20.6" rx="2.7" ry="1.8" fill="#344563"/>
<path d="M16.2 22.2V24.6M14.9 24.8H17.5" stroke="#344563" stroke-width="0.9" fill="none"/>
<circle cx="12.2" cy="12.4" r="0.95" fill="#344563"/><circle cx="20.3" cy="12.4" r="0.95" fill="#344563"/></svg>
<span class="t" style="left:1001.14px;top:530.45px;font-size:14px;line-height:20px;color:#0052CC;letter-spacing:0.315px;-webkit-text-stroke:0.4px #0052CC;">admin</span>
<svg style="left:1134.0px;top:524.0px" width="32" height="32" viewBox="0 0 32 32"><circle cx="16" cy="16" r="16" fill="#00B8D9"/>
<circle cx="8.4" cy="9.6" r="2.7" fill="#FF8B00"/><circle cx="24" cy="9.6" r="2.7" fill="#FF8B00"/>
<path fill="#FFAB00" d="M9.2 7.4C11.5 6.2 20.9 6.2 23.2 7.4C24.6 10.5 24.8 17.5 24.6 21.2L19.8 27.2C18.3 28.1 14.1 28.1 12.6 27.2L7.8 21.2C7.6 17.5 7.8 10.5 9.2 7.4Z"/>
<path fill="#fff" d="M13.4 6.6C15 6.3 17.4 6.3 19 6.6C19.2 10 20.2 13.5 21.2 16.5L21.4 23.2L19 25.6C17.5 26.2 14.9 26.2 13.4 25.6L11 23.2L11.2 16.5C12.2 13.5 13.2 10 13.4 6.6Z"/>
<ellipse cx="16.2" cy="20.6" rx="2.7" ry="1.8" fill="#344563"/>
<path d="M16.2 22.2V24.6M14.9 24.8H17.5" stroke="#344563" stroke-width="0.9" fill="none"/>
<circle cx="12.2" cy="12.4" r="0.95" fill="#344563"/><circle cx="20.3" cy="12.4" r="0.95" fill="#344563"/></svg>
<span class="t" style="left:1187.34px;top:530.45px;font-size:14px;line-height:20px;color:#0052CC;letter-spacing:0.290px;-webkit-text-stroke:0.4px #0052CC;">admin</span>
<span class="t" style="left:1311.74px;top:530.45px;font-size:14px;line-height:20px;color:#172B4D;letter-spacing:0.125px;">1/23/2024</span>
<div class="badge" style="left:1420.8px;top:532.0px"></div>
<span class="t" style="left:1425.92px;top:532.04px;font-size:12px;line-height:16px;color:#fff;font-weight:700;letter-spacing:0.312px;">6</span>
<svg style="left:1511.5px;top:531.7px" width="17" height="17" viewBox="0 0 17 17" fill="#42526E"><path d="M0.3 1.5H5.3C5.3 0.6 5.8 0.3 6.5 0.3H10.5C11.2 0.3 11.7 0.6 11.7 1.5H16.7V3.3H0.3Z"/><path d="M1.5 4.2H15.5L14 16.6H3Z"/></svg>
<svg style="left:1549.5px;top:530.7px" width="5" height="19" viewBox="0 0 5 19" fill="#42526E"><circle cx="2.5" cy="2.5" r="2.1"/><circle cx="2.5" cy="9.5" r="2.1"/><circle cx="2.5" cy="16.5" r="2.1"/></svg>
<svg style="left:18.0px;top:591.4px" width="24" height="24" viewBox="0 0 24 24"><path d="M12.00 3.40L14.63 8.38L20.18 9.34L16.25 13.38L17.05 18.96L12.00 16.47L6.95 18.96L7.75 13.38L3.82 9.34L9.37 8.38Z" fill="none" stroke="#C4C6CA" stroke-width="1.8" stroke-linejoin="round"/></svg>
<svg style="left:67.3px;top:592.7px" width="13" height="15" viewBox="0 0 13 15"><path fill="#172B4D" d="M0.2 1.1C2 0.1 4 0.3 6 0.8S10 1.2 11.6 0.5V8.3C10 9 8 8.9 6.5 8.5S3.5 8 2.1 8.7V14.6H0.2Z"/></svg>
<span class="t" style="left:112.84px;top:585.95px;font-size:14px;line-height:20px;color:#0052CC;letter-spacing:0.358px;-webkit-text-stroke:0.4px #0052CC;">true</span>
<div class="loz" style="left:352.7px;top:592.0px;width:58.2px"></div>
<span class="t" style="left:356.64px;top:591.45px;font-size:14px;line-height:20px;color:#253858;transform:scaleX(0.8906);">GLOBAL</span>
<span class="t" style="left:472.74px;top:592.45px;font-size:14px;line-height:20px;color:#172B4D;transform:scaleX(0.8959);">GLOBAL</span>
<svg style="left:667.0px;top:586.0px" width="32" height="32" viewBox="0 0 32 32"><circle cx="16" cy="16" r="16" fill="#00B8D9"/>
<circle cx="8.4" cy="9.6" r="2.7" fill="#FF8B00"/><circle cx="24" cy="9.6" r="2.7" fill="#FF8B00"/>
<path fill="#FFAB00" d="M9.2 7.4C11.5 6.2 20.9 6.2 23.2 7.4C24.6 10.5 24.8 17.5 24.6 21.2L19.8 27.2C18.3 28.1 14.1 28.1 12.6 27.2L7.8 21.2C7.6 17.5 7.8 10.5 9.2 7.4Z"/>
<path fill="#fff" d="M13.4 6.6C15 6.3 17.4 6.3 19 6.6C19.2 10 20.2 13.5 21.2 16.5L21.4 23.2L19 25.6C17.5 26.2 14.9 26.2 13.4 25.6L11 23.2L11.2 16.5C12.2 13.5 13.2 10 13.4 6.6Z"/>
<ellipse cx="16.2" cy="20.6" rx="2.7" ry="1.8" fill="#344563"/>
<path d="M16.2 22.2V24.6M14.9 24.8H17.5" stroke="#344563" stroke-width="0.9" fill="none"/>
<circle cx="12.2" cy="12.4" r="0.95" fill="#344563"/><circle cx="20.3" cy="12.4" r="0.95" fill="#344563"/></svg>
<span class="t" style="left:721.74px;top:592.45px;font-size:14px;line-height:20px;color:#0052CC;letter-spacing:0.315px;-webkit-text-stroke:0.4px #0052CC;">admin</span>
<span class="t" style="left:830.44px;top:592.45px;font-size:14px;line-height:20px;color:#172B4D;letter-spacing:0.138px;">1/23/2024</span>
<svg style="left:947.0px;top:586.0px" width="32" height="32" viewBox="0 0 32 32"><circle cx="16" cy="16" r="16" fill="#00B8D9"/>
<circle cx="8.4" cy="9.6" r="2.7" fill="#FF8B00"/><circle cx="24" cy="9.6" r="2.7" fill="#FF8B00"/>
<path fill="#FFAB00" d="M9.2 7.4C11.5 6.2 20.9 6.2 23.2 7.4C24.6 10.5 24.8 17.5 24.6 21.2L19.8 27.2C18.3 28.1 14.1 28.1 12.6 27.2L7.8 21.2C7.6 17.5 7.8 10.5 9.2 7.4Z"/>
<path fill="#fff" d="M13.4 6.6C15 6.3 17.4 6.3 19 6.6C19.2 10 20.2 13.5 21.2 16.5L21.4 23.2L19 25.6C17.5 26.2 14.9 26.2 13.4 25.6L11 23.2L11.2 16.5C12.2 13.5 13.2 10 13.4 6.6Z"/>
<ellipse cx="16.2" cy="20.6" rx="2.7" ry="1.8" fill="#344563"/>
<path d="M16.2 22.2V24.6M14.9 24.8H17.5" stroke="#344563" stroke-width="0.9" fill="none"/>
<circle cx="12.2" cy="12.4" r="0.95" fill="#344563"/><circle cx="20.3" cy="12.4" r="0.95" fill="#344563"/></svg>
<span class="t" style="left:1001.14px;top:592.45px;font-size:14px;line-height:20px;color:#0052CC;letter-spacing:0.315px;-webkit-text-stroke:0.4px #0052CC;">admin</span>
<svg style="left:1134.0px;top:586.0px" width="32" height="32" viewBox="0 0 32 32"><circle cx="16" cy="16" r="16" fill="#00B8D9"/>
<circle cx="8.4" cy="9.6" r="2.7" fill="#FF8B00"/><circle cx="24" cy="9.6" r="2.7" fill="#FF8B00"/>
<path fill="#FFAB00" d="M9.2 7.4C11.5 6.2 20.9 6.2 23.2 7.4C24.6 10.5 24.8 17.5 24.6 21.2L19.8 27.2C18.3 28.1 14.1 28.1 12.6 27.2L7.8 21.2C7.6 17.5 7.8 10.5 9.2 7.4Z"/>
<path fill="#fff" d="M13.4 6.6C15 6.3 17.4 6.3 19 6.6C19.2 10 20.2 13.5 21.2 16.5L21.4 23.2L19 25.6C17.5 26.2 14.9 26.2 13.4 25.6L11 23.2L11.2 16.5C12.2 13.5 13.2 10 13.4 6.6Z"/>
<ellipse cx="16.2" cy="20.6" rx="2.7" ry="1.8" fill="#344563"/>
<path d="M16.2 22.2V24.6M14.9 24.8H17.5" stroke="#344563" stroke-width="0.9" fill="none"/>
<circle cx="12.2" cy="12.4" r="0.95" fill="#344563"/><circle cx="20.3" cy="12.4" r="0.95" fill="#344563"/></svg>
<span class="t" style="left:1187.34px;top:592.45px;font-size:14px;line-height:20px;color:#0052CC;letter-spacing:0.290px;-webkit-text-stroke:0.4px #0052CC;">admin</span>
<span class="t" style="left:1311.74px;top:592.45px;font-size:14px;line-height:20px;color:#172B4D;letter-spacing:0.125px;">1/24/2024</span>
<div class="badge" style="left:1420.8px;top:594.0px"></div>
<span class="t" style="left:1425.92px;top:594.04px;font-size:12px;line-height:16px;color:#fff;font-weight:700;letter-spacing:0.312px;">5</span>
<svg style="left:1511.5px;top:593.7px" width="17" height="17" viewBox="0 0 17 17" fill="#42526E"><path d="M0.3 1.5H5.3C5.3 0.6 5.8 0.3 6.5 0.3H10.5C11.2 0.3 11.7 0.6 11.7 1.5H16.7V3.3H0.3Z"/><path d="M1.5 4.2H15.5L14 16.6H3Z"/></svg>
<svg style="left:1549.5px;top:592.7px" width="5" height="19" viewBox="0 0 5 19" fill="#42526E"><circle cx="2.5" cy="2.5" r="2.1"/><circle cx="2.5" cy="9.5" r="2.1"/><circle cx="2.5" cy="16.5" r="2.1"/></svg>
<svg style="left:18.0px;top:647.4px" width="24" height="24" viewBox="0 0 24 24"><path d="M12.00 3.40L14.63 8.38L20.18 9.34L16.25 13.38L17.05 18.96L12.00 16.47L6.95 18.96L7.75 13.38L3.82 9.34L9.37 8.38Z" fill="none" stroke="#C4C6CA" stroke-width="1.8" stroke-linejoin="round"/></svg>
<svg style="left:67.3px;top:648.7px" width="13" height="15" viewBox="0 0 13 15"><path fill="#172B4D" d="M0.2 1.1C2 0.1 4 0.3 6 0.8S10 1.2 11.6 0.5V8.3C10 9 8 8.9 6.5 8.5S3.5 8 2.1 8.7V14.6H0.2Z"/></svg>
<span class="t" style="left:112.84px;top:641.95px;font-size:14px;line-height:20px;color:#0052CC;letter-spacing:0.114px;-webkit-text-stroke:0.4px #0052CC;">Standardvorlage Scrum+Story</span>
<div class="loz" style="left:352.7px;top:648.0px;width:58.2px"></div>
<span class="t" style="left:356.64px;top:647.45px;font-size:14px;line-height:20px;color:#253858;transform:scaleX(0.8906);">GLOBAL</span>
<span class="t" style="left:472.74px;top:648.45px;font-size:14px;line-height:20px;color:#172B4D;transform:scaleX(0.8959);">GLOBAL</span>
<svg style="left:667.0px;top:642.0px" width="32" height="32" viewBox="0 0 32 32"><circle cx="16" cy="16" r="16" fill="#00B8D9"/>
<circle cx="8.4" cy="9.6" r="2.7" fill="#FF8B00"/><circle cx="24" cy="9.6" r="2.7" fill="#FF8B00"/>
<path fill="#FFAB00" d="M9.2 7.4C11.5 6.2 20.9 6.2 23.2 7.4C24.6 10.5 24.8 17.5 24.6 21.2L19.8 27.2C18.3 28.1 14.1 28.1 12.6 27.2L7.8 21.2C7.6 17.5 7.8 10.5 9.2 7.4Z"/>
<path fill="#fff" d="M13.4 6.6C15 6.3 17.4 6.3 19 6.6C19.2 10 20.2 13.5 21.2 16.5L21.4 23.2L19 25.6C17.5 26.2 14.9 26.2 13.4 25.6L11 23.2L11.2 16.5C12.2 13.5 13.2 10 13.4 6.6Z"/>
<ellipse cx="16.2" cy="20.6" rx="2.7" ry="1.8" fill="#344563"/>
<path d="M16.2 22.2V24.6M14.9 24.8H17.5" stroke="#344563" stroke-width="0.9" fill="none"/>
<circle cx="12.2" cy="12.4" r="0.95" fill="#344563"/><circle cx="20.3" cy="12.4" r="0.95" fill="#344563"/></svg>
<span class="t" style="left:721.74px;top:648.45px;font-size:14px;line-height:20px;color:#0052CC;letter-spacing:0.315px;-webkit-text-stroke:0.4px #0052CC;">admin</span>
<span class="t" style="left:830.44px;top:648.45px;font-size:14px;line-height:20px;color:#172B4D;letter-spacing:0.138px;">1/24/2024</span>
<svg style="left:947.0px;top:642.0px" width="32" height="32" viewBox="0 0 32 32"><circle cx="16" cy="16" r="16" fill="#00B8D9"/>
<circle cx="8.4" cy="9.6" r="2.7" fill="#FF8B00"/><circle cx="24" cy="9.6" r="2.7" fill="#FF8B00"/>
<path fill="#FFAB00" d="M9.2 7.4C11.5 6.2 20.9 6.2 23.2 7.4C24.6 10.5 24.8 17.5 24.6 21.2L19.8 27.2C18.3 28.1 14.1 28.1 12.6 27.2L7.8 21.2C7.6 17.5 7.8 10.5 9.2 7.4Z"/>
<path fill="#fff" d="M13.4 6.6C15 6.3 17.4 6.3 19 6.6C19.2 10 20.2 13.5 21.2 16.5L21.4 23.2L19 25.6C17.5 26.2 14.9 26.2 13.4 25.6L11 23.2L11.2 16.5C12.2 13.5 13.2 10 13.4 6.6Z"/>
<ellipse cx="16.2" cy="20.6" rx="2.7" ry="1.8" fill="#344563"/>
<path d="M16.2 22.2V24.6M14.9 24.8H17.5" stroke="#344563" stroke-width="0.9" fill="none"/>
<circle cx="12.2" cy="12.4" r="0.95" fill="#344563"/><circle cx="20.3" cy="12.4" r="0.95" fill="#344563"/></svg>
<span class="t" style="left:1001.14px;top:648.45px;font-size:14px;line-height:20px;color:#0052CC;letter-spacing:0.315px;-webkit-text-stroke:0.4px #0052CC;">admin</span>
<svg style="left:1134.0px;top:642.0px" width="32" height="32" viewBox="0 0 32 32"><circle cx="16" cy="16" r="16" fill="#00B8D9"/>
<circle cx="8.4" cy="9.6" r="2.7" fill="#FF8B00"/><circle cx="24" cy="9.6" r="2.7" fill="#FF8B00"/>
<path fill="#FFAB00" d="M9.2 7.4C11.5 6.2 20.9 6.2 23.2 7.4C24.6 10.5 24.8 17.5 24.6 21.2L19.8 27.2C18.3 28.1 14.1 28.1 12.6 27.2L7.8 21.2C7.6 17.5 7.8 10.5 9.2 7.4Z"/>
<path fill="#fff" d="M13.4 6.6C15 6.3 17.4 6.3 19 6.6C19.2 10 20.2 13.5 21.2 16.5L21.4 23.2L19 25.6C17.5 26.2 14.9 26.2 13.4 25.6L11 23.2L11.2 16.5C12.2 13.5 13.2 10 13.4 6.6Z"/>
<ellipse cx="16.2" cy="20.6" rx="2.7" ry="1.8" fill="#344563"/>
<path d="M16.2 22.2V24.6M14.9 24.8H17.5" stroke="#344563" stroke-width="0.9" fill="none"/>
<circle cx="12.2" cy="12.4" r="0.95" fill="#344563"/><circle cx="20.3" cy="12.4" r="0.95" fill="#344563"/></svg>
<span class="t" style="left:1187.34px;top:648.45px;font-size:14px;line-height:20px;color:#0052CC;letter-spacing:0.290px;-webkit-text-stroke:0.4px #0052CC;">admin</span>
<span class="t" style="left:1311.74px;top:648.45px;font-size:14px;line-height:20px;color:#172B4D;letter-spacing:0.125px;">1/29/2024</span>
<div class="badge" style="left:1420.8px;top:650.0px"></div>
<span class="t" style="left:1425.92px;top:650.04px;font-size:12px;line-height:16px;color:#fff;font-weight:700;letter-spacing:0.312px;">9</span>
<svg style="left:1511.5px;top:649.7px" width="17" height="17" viewBox="0 0 17 17" fill="#42526E"><path d="M0.3 1.5H5.3C5.3 0.6 5.8 0.3 6.5 0.3H10.5C11.2 0.3 11.7 0.6 11.7 1.5H16.7V3.3H0.3Z"/><path d="M1.5 4.2H15.5L14 16.6H3Z"/></svg>
<svg style="left:1549.5px;top:648.7px" width="5" height="19" viewBox="0 0 5 19" fill="#42526E"><circle cx="2.5" cy="2.5" r="2.1"/><circle cx="2.5" cy="9.5" r="2.1"/><circle cx="2.5" cy="16.5" r="2.1"/></svg>
<svg style="left:18.0px;top:703.4px" width="24" height="24" viewBox="0 0 24 24"><path d="M12.00 3.40L14.63 8.38L20.18 9.34L16.25 13.38L17.05 18.96L12.00 16.47L6.95 18.96L7.75 13.38L3.82 9.34L9.37 8.38Z" fill="none" stroke="#C4C6CA" stroke-width="1.8" stroke-linejoin="round"/></svg>
<svg style="left:67.3px;top:704.7px" width="13" height="15" viewBox="0 0 13 15"><path fill="#172B4D" d="M0.2 1.1C2 0.1 4 0.3 6 0.8S10 1.2 11.6 0.5V8.3C10 9 8 8.9 6.5 8.5S3.5 8 2.1 8.7V14.6H0.2Z"/></svg>
<span class="t" style="left:112.84px;top:697.95px;font-size:14px;line-height:20px;color:#0052CC;letter-spacing:0.369px;-webkit-text-stroke:0.4px #0052CC;">default IT+problem</span>
<div class="loz" style="left:352.7px;top:704.0px;width:63.9px"></div>
<span class="t" style="left:356.64px;top:703.45px;font-size:14px;line-height:20px;color:#253858;letter-spacing:-0.173px;">3 owners</span>
<span class="t" style="left:472.74px;top:704.45px;font-size:14px;line-height:20px;color:#172B4D;letter-spacing:-0.130px;">3 owners</span>
<svg style="left:667.0px;top:698.0px" width="32" height="32" viewBox="0 0 32 32"><circle cx="16" cy="16" r="16" fill="#00B8D9"/>
<circle cx="8.4" cy="9.6" r="2.7" fill="#FF8B00"/><circle cx="24" cy="9.6" r="2.7" fill="#FF8B00"/>
<path fill="#FFAB00" d="M9.2 7.4C11.5 6.2 20.9 6.2 23.2 7.4C24.6 10.5 24.8 17.5 24.6 21.2L19.8 27.2C18.3 28.1 14.1 28.1 12.6 27.2L7.8 21.2C7.6 17.5 7.8 10.5 9.2 7.4Z"/>
<path fill="#fff" d="M13.4 6.6C15 6.3 17.4 6.3 19 6.6C19.2 10 20.2 13.5 21.2 16.5L21.4 23.2L19 25.6C17.5 26.2 14.9 26.2 13.4 25.6L11 23.2L11.2 16.5C12.2 13.5 13.2 10 13.4 6.6Z"/>
<ellipse cx="16.2" cy="20.6" rx="2.7" ry="1.8" fill="#344563"/>
<path d="M16.2 22.2V24.6M14.9 24.8H17.5" stroke="#344563" stroke-width="0.9" fill="none"/>
<circle cx="12.2" cy="12.4" r="0.95" fill="#344563"/><circle cx="20.3" cy="12.4" r="0.95" fill="#344563"/></svg>
<span class="t" style="left:721.74px;top:704.45px;font-size:14px;line-height:20px;color:#0052CC;letter-spacing:0.315px;-webkit-text-stroke:0.4px #0052CC;">admin</span>
<span class="t" style="left:830.44px;top:704.45px;font-size:14px;line-height:20px;color:#172B4D;letter-spacing:0.138px;">1/25/2024</span>
<svg style="left:947.0px;top:698.0px" width="32" height="32" viewBox="0 0 32 32"><circle cx="16" cy="16" r="16" fill="#00B8D9"/>
<circle cx="8.4" cy="9.6" r="2.7" fill="#FF8B00"/><circle cx="24" cy="9.6" r="2.7" fill="#FF8B00"/>
<path fill="#FFAB00" d="M9.2 7.4C11.5 6.2 20.9 6.2 23.2 7.4C24.6 10.5 24.8 17.5 24.6 21.2L19.8 27.2C18.3 28.1 14.1 28.1 12.6 27.2L7.8 21.2C7.6 17.5 7.8 10.5 9.2 7.4Z"/>
<path fill="#fff" d="M13.4 6.6C15 6.3 17.4 6.3 19 6.6C19.2 10 20.2 13.5 21.2 16.5L21.4 23.2L19 25.6C17.5 26.2 14.9 26.2 13.4 25.6L11 23.2L11.2 16.5C12.2 13.5 13.2 10 13.4 6.6Z"/>
<ellipse cx="16.2" cy="20.6" rx="2.7" ry="1.8" fill="#344563"/>
<path d="M16.2 22.2V24.6M14.9 24.8H17.5" stroke="#344563" stroke-width="0.9" fill="none"/>
<circle cx="12.2" cy="12.4" r="0.95" fill="#344563"/><circle cx="20.3" cy="12.4" r="0.95" fill="#344563"/></svg>
<span class="t" style="left:1001.14px;top:704.45px;font-size:14px;line-height:20px;color:#0052CC;letter-spacing:0.315px;-webkit-text-stroke:0.4px #0052CC;">admin</span>
<svg style="left:1134.0px;top:698.0px" width="32" height="32" viewBox="0 0 32 32"><circle cx="16" cy="16" r="16" fill="#00B8D9"/>
<circle cx="8.4" cy="9.6" r="2.7" fill="#FF8B00"/><circle cx="24" cy="9.6" r="2.7" fill="#FF8B00"/>
<path fill="#FFAB00" d="M9.2 7.4C11.5 6.2 20.9 6.2 23.2 7.4C24.6 10.5 24.8 17.5 24.6 21.2L19.8 27.2C18.3 28.1 14.1 28.1 12.6 27.2L7.8 21.2C7.6 17.5 7.8 10.5 9.2 7.4Z"/>
<path fill="#fff" d="M13.4 6.6C15 6.3 17.4 6.3 19 6.6C19.2 10 20.2 13.5 21.2 16.5L21.4 23.2L19 25.6C17.5 26.2 14.9 26.2 13.4 25.6L11 23.2L11.2 16.5C12.2 13.5 13.2 10 13.4 6.6Z"/>
<ellipse cx="16.2" cy="20.6" rx="2.7" ry="1.8" fill="#344563"/>
<path d="M16.2 22.2V24.6M14.9 24.8H17.5" stroke="#344563" stroke-width="0.9" fill="none"/>
<circle cx="12.2" cy="12.4" r="0.95" fill="#344563"/><circle cx="20.3" cy="12.4" r="0.95" fill="#344563"/></svg>
<span class="t" style="left:1187.34px;top:704.45px;font-size:14px;line-height:20px;color:#0052CC;letter-spacing:0.290px;-webkit-text-stroke:0.4px #0052CC;">admin</span>
<span class="t" style="left:1311.74px;top:704.45px;font-size:14px;line-height:20px;color:#172B4D;letter-spacing:0.125px;">1/25/2024</span>
<div class="badge" style="left:1420.8px;top:706.0px"></div>
<span class="t" style="left:1425.92px;top:706.04px;font-size:12px;line-height:16px;color:#fff;font-weight:700;letter-spacing:0.312px;">2</span>
<svg style="left:1511.5px;top:705.7px" width="17" height="17" viewBox="0 0 17 17" fill="#42526E"><path d="M0.3 1.5H5.3C5.3 0.6 5.8 0.3 6.5 0.3H10.5C11.2 0.3 11.7 0.6 11.7 1.5H16.7V3.3H0.3Z"/><path d="M1.5 4.2H15.5L14 16.6H3Z"/></svg>
<svg style="left:1549.5px;top:704.7px" width="5" height="19" viewBox="0 0 5 19" fill="#42526E"><circle cx="2.5" cy="2.5" r="2.1"/><circle cx="2.5" cy="9.5" r="2.1"/><circle cx="2.5" cy="16.5" r="2.1"/></svg>
<div class="a" style="left:583px;top:45px;width:160px;height:720px;background:#fff;border-radius:3px;box-shadow:0 4px 8px -2px rgba(9,30,66,.25),0 0 1px 0 rgba(9,30,66,.35)"></div>
<span class="t" style="left:592.96px;top:54.99px;font-size:11px;line-height:16px;color:#5E6C84;transform:scaleX(0.8964);-webkit-text-stroke:0.55px #5E6C84;">HIERARCHIES</span>
<span class="t" style="left:592.84px;top:87.15px;font-size:14px;line-height:20px;color:#505F79;letter-spacing:-0.059px;">Apply Hierarchy</span>
<span class="t" style="left:592.84px;top:121.15px;font-size:14px;line-height:20px;color:#505F79;transform:scaleX(0.9686);">Create Hierarchy</span>
<span class="t" style="left:592.84px;top:155.15px;font-size:14px;line-height:20px;color:#505F79;letter-spacing:-0.176px;">Manage Hierarchies</span>
<div class="div" style="top:183px"></div>
<span class="t" style="left:592.96px;top:193.99px;font-size:11px;line-height:16px;color:#5E6C84;transform:scaleX(0.9026);-webkit-text-stroke:0.55px #5E6C84;">TEMPLATES</span>
<span class="t" style="left:592.84px;top:226.15px;font-size:14px;line-height:20px;color:#505F79;transform:scaleX(0.9720);">Create Template</span>
<span class="t" style="left:592.84px;top:260.15px;font-size:14px;line-height:20px;color:#505F79;letter-spacing:-0.150px;">Manage Templates</span>
<div class="div" style="top:288px"></div>
<span class="t" style="left:592.96px;top:298.99px;font-size:11px;line-height:16px;color:#5E6C84;transform:scaleX(0.8373);-webkit-text-stroke:0.55px #5E6C84;">SCOPES</span>
<span class="t" style="left:592.84px;top:331.15px;font-size:14px;line-height:20px;color:#505F79;transform:scaleX(0.9473);">Create Scope</span>
<span class="t" style="left:592.84px;top:365.15px;font-size:14px;line-height:20px;color:#505F79;transform:scaleX(0.9626);">Manage Scopes</span>
<div class="div" style="top:393px"></div>
<span class="t" style="left:592.96px;top:403.99px;font-size:11px;line-height:16px;color:#5E6C84;transform:scaleX(0.9084);-webkit-text-stroke:0.55px #5E6C84;">VARIABLES</span>
<span class="t" style="left:592.84px;top:436.15px;font-size:14px;line-height:20px;color:#505F79;transform:scaleX(0.9670);">Create variable</span>
<span class="t" style="left:592.84px;top:470.15px;font-size:14px;line-height:20px;color:#505F79;letter-spacing:-0.161px;">Manage variables</span>
<div class="div" style="top:498px"></div>
<span class="t" style="left:592.96px;top:508.99px;font-size:11px;line-height:16px;color:#5E6C84;transform:scaleX(0.9094);-webkit-text-stroke:0.55px #5E6C84;">TAGS</span>
<span class="t" style="left:592.84px;top:541.15px;font-size:14px;line-height:20px;color:#505F79;transform:scaleX(0.9438);">Create Tag</span>
<span class="t" style="left:592.84px;top:575.15px;font-size:14px;line-height:20px;color:#505F79;transform:scaleX(0.9617);">Manage Tags</span>
<div class="div" style="top:603px"></div>
<span class="t" style="left:592.96px;top:613.99px;font-size:11px;line-height:16px;color:#5E6C84;transform:scaleX(0.8744);-webkit-text-stroke:0.55px #5E6C84;">CHECKLISTS</span>
<span class="t" style="left:592.84px;top:646.15px;font-size:14px;line-height:20px;color:#505F79;transform:scaleX(0.9689);">Manage Checklists</span>
<div class="div" style="top:674px"></div>
<span class="t" style="left:592.96px;top:684.99px;font-size:11px;line-height:16px;color:#5E6C84;transform:scaleX(0.9393);-webkit-text-stroke:0.55px #5E6C84;">CONFIGURATIONS</span>
<span class="t" style="left:592.84px;top:717.15px;font-size:14px;line-height:20px;color:#505F79;transform:scaleX(0.9416);">Permissions</span>
<div class="a" style="left:583px;top:220px;width:160px;height:32px;border:3px solid #E6443D"></div>
</body></html>
